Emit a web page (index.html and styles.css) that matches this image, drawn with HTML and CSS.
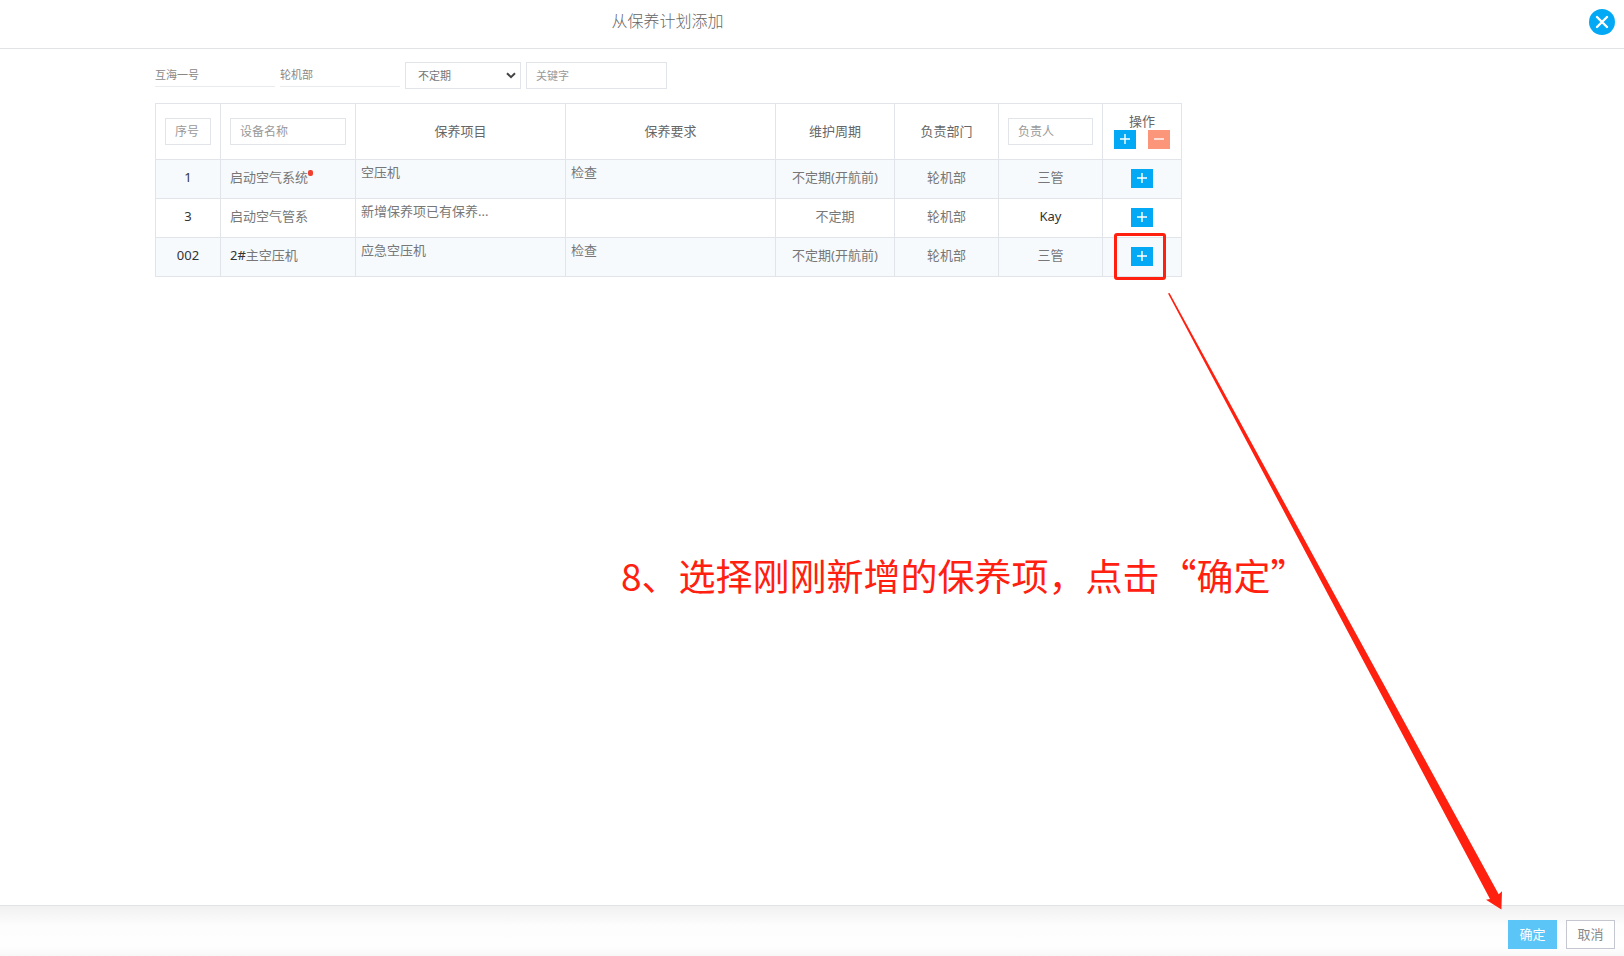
FILE: index.html
```html
<!DOCTYPE html>
<html lang="zh-CN">
<head>
<meta charset="utf-8">
<title>从保养计划添加</title>
<link rel="stylesheet" href="styles.css">
</head>
<body>
<div class="dialog">
  <header class="dialog-header">
    <h1 class="dialog-title">从保养计划添加</h1>
    <button class="close" type="button" aria-label="关闭">
      <svg viewBox="0 0 26 26" width="26" height="26"><path d="M8 8l10 10M18 8L8 18" fill="none" stroke="#fff" stroke-width="2.4" stroke-linecap="round"/></svg>
    </button>
  </header>

  <main class="dialog-body">
    <form class="filters">
      <span class="fixed-value">互海一号</span>
      <span class="fixed-value">轮机部</span>
      <span class="select-wrap">
        <select class="field period" aria-label="维护周期"><option>不定期</option></select>
        <svg class="chevron" viewBox="0 0 10 7" width="10" height="7"><path d="M1 1.2l4 4 4-4" fill="none" stroke="#444" stroke-width="2"/></svg>
      </span>
      <input class="field keyword" type="text" placeholder="关键字" aria-label="关键字">
    </form>

    <table class="plan">
      <colgroup>
        <col class="c-no"><col class="c-device"><col class="c-item"><col class="c-item"><col class="c-cycle"><col class="c-dept"><col class="c-dept"><col class="c-action">
      </colgroup>
      <thead>
        <tr>
          <th class="search-head"><input class="field" type="text" placeholder="序号" aria-label="序号"></th>
          <th class="search-head"><input class="field" type="text" placeholder="设备名称" aria-label="设备名称"></th>
          <th>保养项目</th>
          <th>保养要求</th>
          <th>维护周期</th>
          <th>负责部门</th>
          <th class="search-head"><input class="field" type="text" placeholder="负责人" aria-label="负责人"></th>
          <th class="action-head">操作
            <span class="actions">
              <button class="square" type="button" aria-label="全部添加"><svg viewBox="0 0 12 12" width="12" height="12"><path d="M6 1v10M1 6h10"/></svg></button>
              <button class="square remove" type="button" aria-label="全部移除"><svg viewBox="0 0 12 12" width="12" height="12"><path d="M1 6h10"/></svg></button>
            </span>
          </th>
        </tr>
      </thead>
      <tbody>
        <tr>
          <td class="dark">1</td>
          <td class="device">启动空气系统<i class="dot"></i></td>
          <td class="note">空压机</td>
          <td class="note">检查</td>
          <td>不定期(开航前)</td>
          <td>轮机部</td>
          <td>三管</td>
          <td><button class="square" type="button" aria-label="添加"><svg viewBox="0 0 12 12" width="12" height="12"><path d="M6 1v10M1 6h10"/></svg></button></td>
        </tr>
        <tr>
          <td class="dark">3</td>
          <td class="device">启动空气管系</td>
          <td class="note">新增保养项已有保养...</td>
          <td class="note"></td>
          <td>不定期</td>
          <td>轮机部</td>
          <td class="dark">Kay</td>
          <td><button class="square" type="button" aria-label="添加"><svg viewBox="0 0 12 12" width="12" height="12"><path d="M6 1v10M1 6h10"/></svg></button></td>
        </tr>
        <tr>
          <td class="dark">002</td>
          <td class="device"><span class="dark">2#</span>主空压机</td>
          <td class="note">应急空压机</td>
          <td class="note">检查</td>
          <td>不定期(开航前)</td>
          <td>轮机部</td>
          <td>三管</td>
          <td><span class="marked"><button class="square" type="button" aria-label="添加"><svg viewBox="0 0 12 12" width="12" height="12"><path d="M6 1v10M1 6h10"/></svg></button></span></td>
        </tr>
      </tbody>
    </table>
  </main>

  <footer class="dialog-footer">
    <button class="btn primary" type="button">确定</button>
    <button class="btn" type="button">取消</button>
  </footer>
</div>

<p class="callout">8、选择刚刚新增的保养项，点击“确定”</p>
<svg class="arrow" viewBox="0 0 334 617" width="334" height="617" aria-hidden="true"><path d="M0 0.5L1.500 0L330.700 601.300L334 598.300L333.400 616.400L318 606.700L322 606Z" fill="#ff2010"/></svg>
</body>
</html>
```
FILE: styles.css
```css
* {
  box-sizing: border-box;
}

body {
  margin: 0;
  background: #fff;
  color: #777;
  font: 13px/20px "Noto Sans", "Noto Sans CJK SC", sans-serif;
}

button,
input,
select {
  margin: 0;
  font-family: inherit;
}

.dialog {
  display: flex;
  flex-direction: column;
  min-height: 100vh;
}

.dialog-header {
  display: flex;
  align-items: center;
  justify-content: space-between;
  padding: 0 9px 4px 0;
  height: 49px;
  border-bottom: 1px solid #e1e4e6;
}

.dialog-title {
  flex: 1;
  margin: 0;
  padding: 0 254px 2px 0;
  color: #666;
  font-size: 16px;
  font-weight: 300;
  text-align: center;
}

.close {
  display: flex;
  padding: 0;
  border: 0;
  border-radius: 50%;
  background: #03a9f4;
}

.dialog-body {
  flex: 1;
  padding: 13px 444px 24px 155px;
}

.filters {
  display: flex;
  align-items: flex-start;
  gap: 5px;
  margin-bottom: 14px;
}

.fixed-value {
  width: 120px;
  height: 25px;
  border-bottom: 1px solid #e9ebed;
  color: #888;
  font-size: 11px;
  line-height: 25px;
}

.field {
  display: block;
  width: 100%;
  height: 27px;
  padding: 0 9px;
  border: 1px solid #e1e4e8;
  border-radius: 0;
  background: #fff;
  color: #777;
  font-size: 12px;
  outline: 0;
}

.field::placeholder {
  color: #999;
  opacity: 1;
}

.select-wrap {
  position: relative;
  width: 116px;
}

.period {
  appearance: none;
  padding: 0 12px;
  font-size: 11px;
}

.chevron {
  position: absolute;
  top: 10px;
  right: 5px;
  pointer-events: none;
}

.keyword {
  width: 141px;
  font-size: 11px;
}

.plan {
  width: 100%;
  border-collapse: collapse;
  table-layout: fixed;
}

.c-no { width: 65px; }
.c-device { width: 135px; }
.c-item { width: 210px; }
.c-cycle { width: 119px; }
.c-dept { width: 104px; }
.c-action { width: 79px; }

.plan th,
.plan td {
  height: 39px;
  padding: 0 9px 4px;
  border: 1px solid #e1e4e8;
  font-weight: 400;
  text-align: center;
  white-space: nowrap;
}

.plan th {
  height: 56px;
  padding-bottom: 2px;
  color: #666;
}

.plan .search-head {
  padding-bottom: 0;
}

.plan tbody tr:nth-child(odd) {
  background: #f6fafd;
}

.plan .device {
  text-align: left;
}

.plan .note {
  padding: 2px 5px;
  text-align: left;
  vertical-align: top;
}

.plan .dark {
  color: #333;
}

.plan .action-head {
  padding-bottom: 1px;
  line-height: 16px;
}

.dot {
  display: inline-block;
  width: 5px;
  height: 6px;
  border-radius: 2px;
  background: #f04030;
  vertical-align: 6px;
}

.actions {
  display: flex;
  justify-content: center;
  gap: 12px;
  margin-top: 1px;
}

.square {
  display: inline-flex;
  align-items: flex-start;
  justify-content: center;
  width: 22px;
  height: 19px;
  padding: 3px 0 0;
  border: 0;
  background: #03a9f4;
  vertical-align: middle;
}

.square path {
  fill: none;
  stroke: #fff;
  stroke-width: 1.4;
}

.square.remove {
  background: #fc967a;
}

.marked {
  position: relative;
}

.marked::after {
  content: "";
  box-sizing: border-box;
  position: absolute;
  top: -12px;
  right: -13px;
  width: 52px;
  height: 47px;
  border: 3px solid #ff2010;
  border-radius: 3px;
  pointer-events: none;
}

.dialog-footer {
  display: flex;
  justify-content: flex-end;
  gap: 9px;
  padding: 14px 9px 7px;
  border-top: 1px solid #e1e3e4;
  background: linear-gradient(#f1f1f1, #fdfdfd 40%, #fefefe 80%, #f8f8f8);
}

.btn {
  width: 49px;
  height: 29px;
  padding: 0 0 2px;
  border: 1px solid #c4c7cf;
  background: #fff;
  color: #888;
  font-size: 13px;
}

.btn.primary {
  border-color: #5bc5f7;
  background: #5bc5f7;
  color: #fff;
}

.callout {
  position: absolute;
  top: 549px;
  left: 621px;
  margin: 0;
  color: #ff2010;
  font: 37px/52px "Noto Sans CJK SC", sans-serif;
  white-space: nowrap;
}

.arrow {
  position: absolute;
  top: 293px;
  left: 1168px;
  pointer-events: none;
}
```
